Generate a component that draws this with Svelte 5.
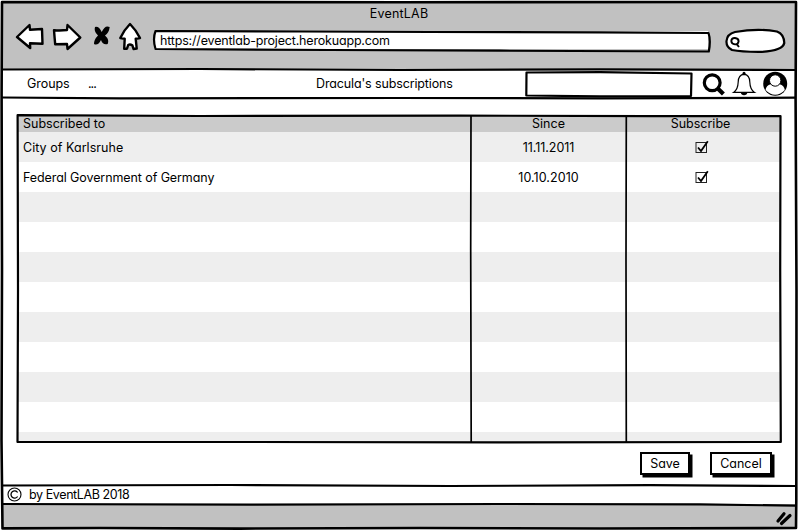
<script>
  const rows = [
    { name: 'City of Karlsruhe', since: '11.11.2011', ns: 0.04, ds: -0.04 },
    { name: 'Federal Government of Germany', since: '10.10.2010', ns: -0.09, ds: 0.05 },
    ...Array.from({ length: 9 }, () => null)
  ];
</script>

<div class="window">
  <header class="chrome">
    <div class="title"><span style="letter-spacing:0.2px">EventLAB</span></div>
    <div class="toolbar">
      <svg class="nav-icons" width="130" height="32" viewBox="14 20 130 32">
        <g fill="#fff" stroke="#000" stroke-width="2.4" stroke-linejoin="round">
          <path d="M17 37 L29.5 25 L30 29.8 L42 29 L42.5 43.7 L30 43.2 L30.2 48 Z" />
          <path d="M54 30.2 Q60 30.8 67 30 L67.5 25 L80.3 37.5 L67.5 49 L67 44 L55.2 44.3 Q54.5 37 54 30.2 Z" />
          <path d="M130 24 Q136 30 140 38 L135.7 38.7 L136.7 48.5 L133.5 49 L132.3 45.2 Q130 44 128.2 45 L127 48.7 L124.2 48.7 L124.7 38.7 L120.3 38 Q124 30 130 24 Z" />
        </g>
        <path d="M95 27 Q99 26 101.7 32 Q105 24.5 109.7 27 Q109 33 105 35.5 Q109.5 39.5 107.7 44 Q103 45.5 101 40 Q98 46 94 44 Q94 39.5 98 35.5 Q93.5 31.5 95 27 Z" fill="#000" />
      </svg>
      <div class="address"><span style="letter-spacing:-0.18px">https://eventlab-project.herokuapp.com</span></div>
      <div class="pill"></div>
    </div>
  </header>

  <nav>
    <span class="groups">Groups</span>
    <span class="dots">...</span>
    <span class="page">Dracula's subscriptions</span>
    <div class="field"></div>
    <svg class="tools" width="88" height="28" viewBox="701 71 88 28">
      <circle cx="712.2" cy="83.7" r="7.9" fill="none" stroke="#000" stroke-width="3.2" />
      <path d="M717.5 89.2 L723.4 95" stroke="#000" stroke-width="4.2" />
      <path d="M744 75.3 C739.5 75.5 738.3 79 738.2 83 C738 88.5 736.5 91.5 733.6 93.4 H754.5 C751.5 91.5 750 88.5 749.8 83 C749.7 79 748.5 75.5 744 75.3 Z" fill="#fff" stroke="#000" stroke-width="1.2" />
      <circle cx="744" cy="74.3" r="1.5" />
      <path d="M740.8 93.5 H747.4 Q747 96.3 744 96.3 Q741.2 96.3 740.8 93.5 Z" />
      <circle cx="775.2" cy="84.7" r="12" />
      <path d="M770.8 85.3 Q766 86.5 765.6 91 Q770 95.8 775.2 95.8 Q780.5 95.8 784.8 91 Q784.2 86.5 779.6 85.3 Z" fill="#fff" />
      <circle cx="775.2" cy="81.5" r="5.7" fill="#fff" stroke="#000" stroke-width="1" />
    </svg>
  </nav>

  <main>
    <div class="table">
      <div class="row head">
        <div class="cell"><span>Subscribed to</span></div>
        <div class="cell mid"><span>Since</span></div>
        <div class="cell mid"><span>Subscribe</span></div>
      </div>
      {#each rows as row, i}
        <div class="row" class:odd={i % 2 === 0}>
          {#if row}
            <div class="cell"><span style="letter-spacing:{row.ns}px">{row.name}</span></div>
            <div class="cell mid"><span style="letter-spacing:{row.ds}px">{row.since}</span></div>
            <div class="cell mid">
              <svg width="16" height="14" viewBox="0 0 16 14">
                <rect x="2" y="2.5" width="10.5" height="10" fill="none" stroke="#222" stroke-width="1" />
                <path d="M4 7.5 L7 11 L13.8 1.3" fill="none" stroke="#000" stroke-width="1.8" />
              </svg>
            </div>
          {/if}
        </div>
      {/each}
    </div>
    <div class="actions">
      <button class="save">Save</button>
      <button class="cancel">Cancel</button>
    </div>
  </main>

  <footer>
    <svg width="15" height="15" viewBox="0 0 15 15" fill="none" stroke="#000">
      <circle cx="7.5" cy="7.5" r="6.5" stroke-width="1.1" />
      <path d="M10.6 5.5 A3.6 3.6 0 1 0 10.6 9.5" stroke-width="1.3" />
    </svg>
    <span class="credit">by EventLAB 2018</span>
  </footer>
  <div class="status"></div>

  <svg class="ink" width="798" height="531" viewBox="0 0 798 531" fill="none" stroke="#000" stroke-width="2.2" stroke-linejoin="round">
    <path d="M2 2 L400 2.2 L796 2 L795.6 100 L796.5 290 L796.3 500 L796 528 L600 528.5 L420 528 L240 528.6 L100 528 L2.5 528.4 L1.5 440 L2 270 L1.6 95 Z" stroke-width="2.6" />
    <path d="M2 69.5 L200 69 L400 70 L600 69.3 L796 70" />
    <path d="M2 97.5 L120 98.3 L400 98 L600 98.4 L796 97.7" />
    <path d="M2 485.5 L230 485 L450 486 L650 485.2 L796 486" />
    <path d="M2 504 L250 504.6 L500 504 L700 504.3 L796 505.7" />
    <path d="M17.6 115.2 L200 116 L460 115.6 L650 116.2 L780.5 116 L780.2 270 L780.8 442 L500 442.3 L250 442 L17.5 442 L18 290 Z" />
    <path d="M471 116 L470.7 250 L471.2 442 M626.3 116 L626 260 L626.3 442" stroke-width="1.7" />
    <path d="M155.5 31 L300 31.5 L430 32 L600 32.3 L708.5 33 Q711 40 708.8 51.5 L500 50.7 L330 50 L155.5 49 Q152.5 39 155.5 31 Z" />
    <path d="M735 32 Q758 28 777 31.5 Q784 34 784.3 43 Q783 50.5 762 51.8 Q742 52 732 50 Q726 47 726.5 41 Q727 34 735 32 Z" />
    <path d="M731.3 41 Q731.5 37.8 735 38 Q738.6 38.3 738.6 41.3 Q738 44.6 735 44.4 Q731.5 44 731.3 41 Z M736.5 43.8 L739 47" stroke-width="1.9" />
    <path d="M526.5 72.5 L600 72.2 L691.5 73.5 L691 96 L600 96.3 L526.3 95.5 Z" />
    <path d="M778 521 L784 513.8 M781.5 523.5 L790 515.5" stroke-width="3.2" stroke-linecap="round" />
  </svg>
</div>

<style>
  :global(body) { margin: 0; background: #fff; }
  .window {
    position: relative;
    width: 798px;
    height: 531px;
    display: flex;
    flex-direction: column;
    box-sizing: border-box;
    padding: 2px 2px 3px;
    overflow: hidden;
    font: 12.5px/16px Inter, 'Noto Sans', sans-serif;
    font-feature-settings: 'cv11';
    color: #000;
  }
  .window span, button { white-space: pre; }
  .ink { position: absolute; inset: 0; pointer-events: none; }
  .chrome { height: 68px; flex: none; background: #c1c1c1; }
  .title { height: 15px; padding-top: 4px; text-align: center; }
  .toolbar { display: flex; align-items: flex-start; padding-left: 12px; }
  .nav-icons { flex: none; margin-top: -1px; }
  .address { width: 548px; height: 17px; margin: 10px 18px 0 10px; padding: 1px 0 0 6px; flex: none; background: #fff; }
  .address span { display: block; padding-top: 1px; }
  .pill { width: 57px; height: 20px; flex: none; margin-top: 10px; border-radius: 14px / 10px; background: #fff; }
  nav { height: 28px; flex: none; display: flex; align-items: center; background: #fff; }
  .groups { width: 61px; padding-left: 25px; letter-spacing: -0.05px; }
  .dots { width: 228px; letter-spacing: -1px; }
  .page { width: 208px; letter-spacing: -0.13px; }
  .field { width: 165px; height: 23px; flex: none; background: #fff; }
  .tools { flex: none; margin-left: 12px; }
  main { flex: 1; min-height: 0; padding: 18px 16px 0 16px; background: #fff; }
  .table { width: 762px; height: 326px; overflow: hidden; }
  .row { height: 30px; display: grid; grid-template-columns: 453px 155px 154px; align-items: center; }
  .head { height: 16px; background: #cbcbcb; }
  .odd { background: #eee; }
  .cell { display: flex; align-items: center; padding-left: 5px; }
  .cell span { padding-top: 2px; }
  .head .cell span { padding: 0 0 0; line-height: 16px; }
  .mid { justify-content: center; padding: 0; }
  .mid:last-child { padding-right: 3px; }
  .head .mid:last-child { padding-right: 5px; }
  .actions { display: flex; justify-content: flex-end; gap: 20px; padding: 10px 8px 0 0; }
  button { height: 23px; padding: 0; border: 2px solid #000; border-radius: 0; background: #fff; color: #000; font: inherit; font-feature-settings: inherit; box-shadow: 2.5px 2.5px 0 #000; }
  .save { width: 50px; }
  .cancel { width: 62px; }
  footer { height: 19px; flex: none; display: flex; align-items: center; gap: 7px; padding-left: 5px; background: #fff; }
  .credit { letter-spacing: -0.4px; padding-top: 1px; }
  .status { height: 24px; flex: none; background: #c1c1c1; }
</style>
